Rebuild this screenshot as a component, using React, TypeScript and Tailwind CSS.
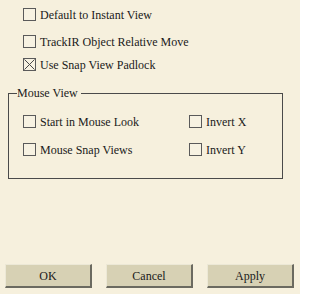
import React from "react";

function Box({ checked = false }: { checked?: boolean }) {
  return (
    <span className="relative inline-block w-[13px] h-[13px] border border-[#5a5a5a] bg-[#f7f2e2] shrink-0">
      {checked && (
        <svg className="absolute inset-0" width="11" height="11" viewBox="0 0 11 11">
          <path d="M0.5 0.5 L10.5 10.5 M10.5 0.5 L0.5 10.5" stroke="#4a4a4a" strokeWidth="1" />
        </svg>
      )}
    </span>
  );
}

function Row({ label, checked, className = "" }: { label: string; checked?: boolean; className?: string }) {
  return (
    <div className={"flex items-center gap-[4px] h-[13px] " + className}>
      <Box checked={checked} />
      <span className="leading-none text-[#1a1a1a]">{label}</span>
    </div>
  );
}

function Btn({ label }: { label: string }) {
  return (
    <button className="w-[87px] h-[24px] bg-[#d7d1b4] border-t border-l border-t-[#ece8d6] border-l-[#ece8d6] border-b-2 border-r-2 border-b-[#6b6a60] border-r-[#6b6a60] text-[12px] text-[#1a1a1a] leading-none">
      {label}
    </button>
  );
}

export default function App() {
  return (
    <div
      className="w-[300px] h-[294px] bg-[#f6f0dd] flex flex-col text-[12px]"
      style={{ fontFamily: '"Liberation Serif", "Times New Roman", serif' }}
    >
      <div className="pl-[23px] pt-[8px]">
        <Row label="Default to Instant View" />
        <Row label="TrackIR Object Relative Move" className="mt-[14px]" />
        <Row label="Use Snap View Padlock" checked className="mt-[10px]" />
      </div>
      <fieldset className="ml-[8px] mt-[16px] w-[275px] h-[92px] border border-[#4a4a4a] px-0 pt-0">
        <legend className="ml-[8px] pr-[3px] leading-none text-[#1a1a1a]">Mouse View</legend>
        <div className="flex flex-col gap-[15px] pl-[14px] pt-[16px]">
          <div className="flex">
            <Row label="Start in Mouse Look" className="w-[166px]" />
            <Row label="Invert X" />
          </div>
          <div className="flex">
            <Row label="Mouse Snap Views" className="w-[166px]" />
            <Row label="Invert Y" />
          </div>
        </div>
      </fieldset>
      <div className="mt-auto mb-[6px] pl-[5px] flex gap-[14px]">
        <Btn label="OK" />
        <Btn label="Cancel" />
        <Btn label="Apply" />
      </div>
    </div>
  );
}
